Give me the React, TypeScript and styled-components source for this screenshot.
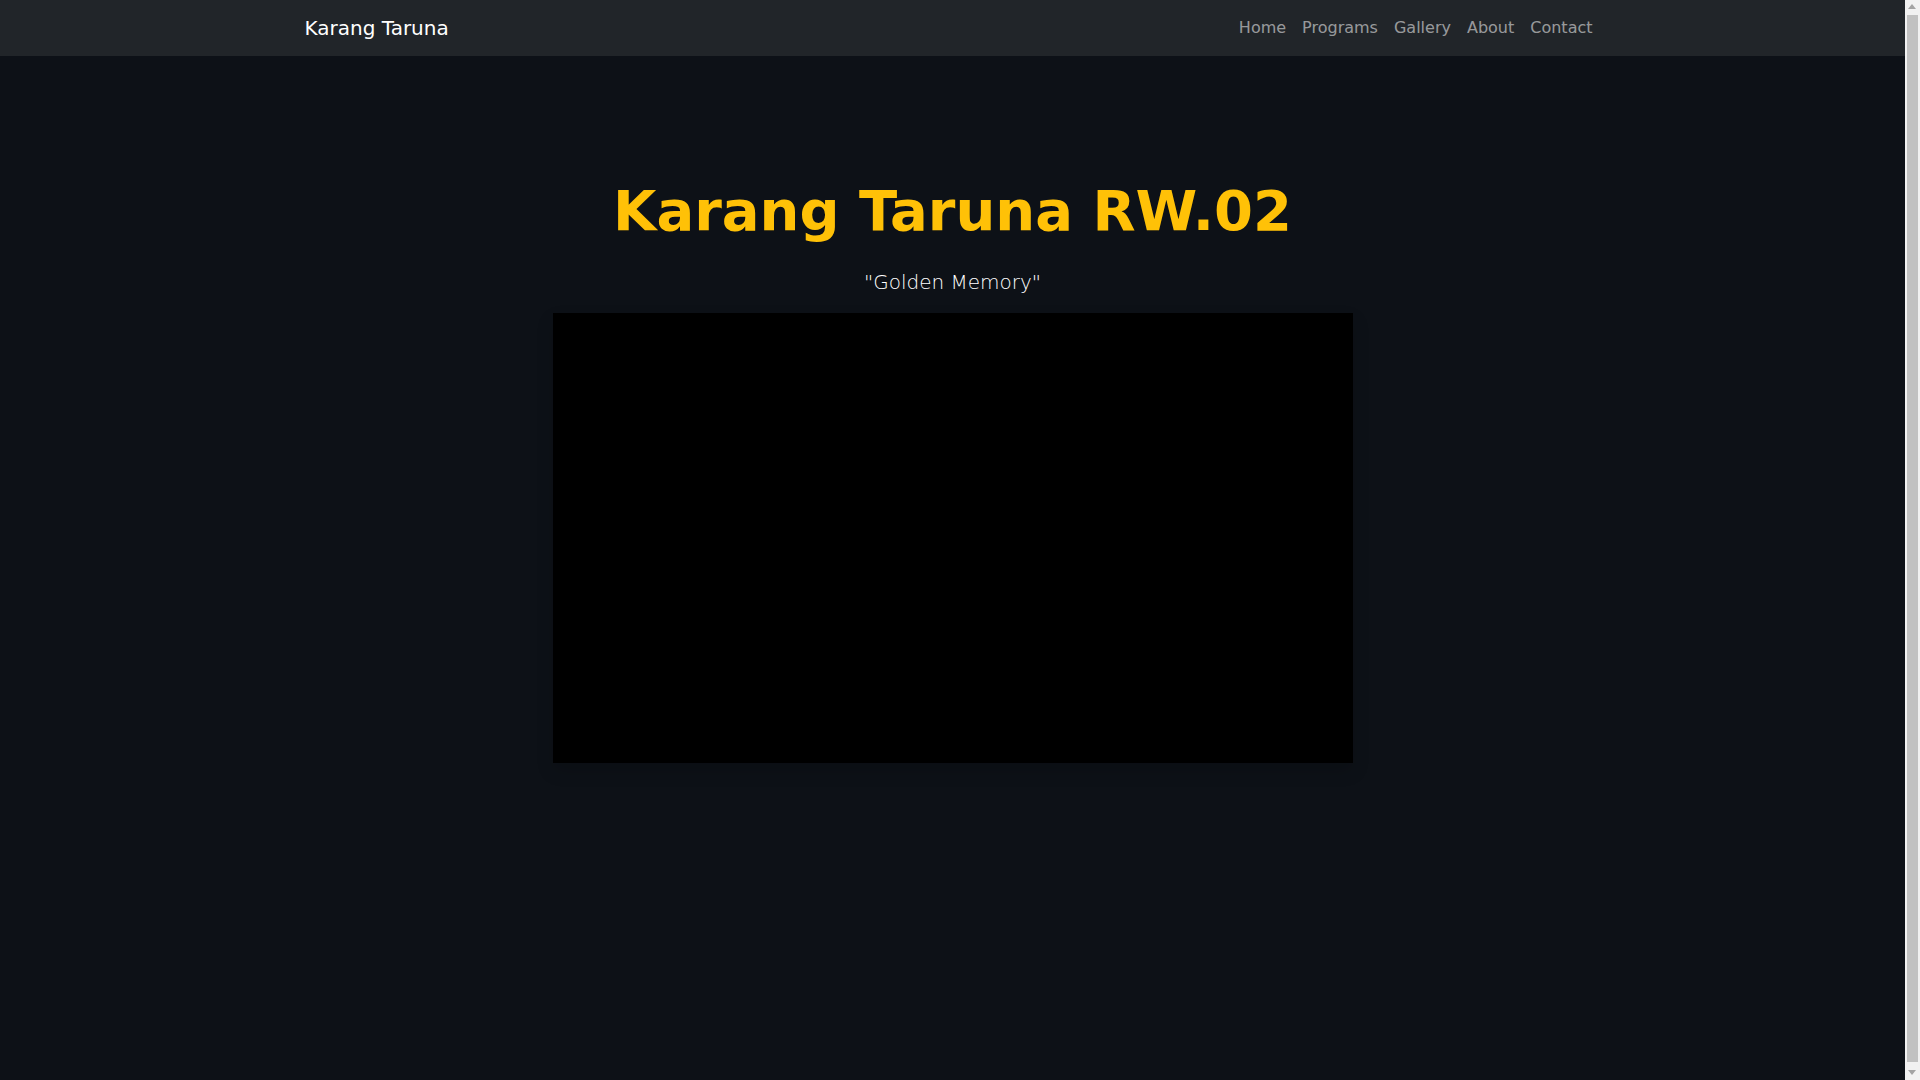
import React from "react";
import styled, { createGlobalStyle } from "styled-components";

const GlobalStyle = createGlobalStyle`
  *, *::before, *::after { box-sizing: border-box; }
  html {
    margin: 0;
    padding: 0 15px 0 0;
    background: #f1f1f1;
  }
  body {
    margin: 0;
    padding: 0;
    min-height: 100vh;
    background: #0d1117;
    color: #ffffff;
    font-family: "DejaVu Sans", "Noto Sans", sans-serif;
    font-size: 16px;
    line-height: 1.5;
  }
`;

const ScrollThumb = styled.div`
  position: fixed;
  top: 15px;
  right: 2px;
  width: 11px;
  height: 1047px;
  background: #c1c1c1;
  &::before {
    content: "";
    position: absolute;
    top: -11px;
    left: 1px;
    border-left: 4.5px solid transparent;
    border-right: 4.5px solid transparent;
    border-bottom: 5px solid #a3a3a3;
  }
  &::after {
    content: "";
    position: absolute;
    bottom: -13px;
    left: 1px;
    border-left: 4.5px solid transparent;
    border-right: 4.5px solid transparent;
    border-top: 5px solid #a3a3a3;
  }
`;

const NavBar = styled.nav`
  background: #212529;
  padding: 8px 0;
`;

const Container = styled.div`
  width: 100%;
  max-width: 1320px;
  margin: 0 auto;
  padding: 0 12px;
`;

const NavInner = styled(Container)`
  display: flex;
  align-items: center;
  justify-content: space-between;
`;

const Brand = styled.a`
  color: #ffffff;
  font-size: 20px;
  line-height: 30px;
  padding: 5px 0;
  text-decoration: none;
`;

const NavList = styled.ul`
  display: flex;
  list-style: none;
  margin: 0;
  padding: 0;
`;

const NavLink = styled.a`
  display: block;
  padding: 8px;
  color: rgba(255, 255, 255, 0.55);
  font-size: 16px;
  line-height: 24px;
  text-decoration: none;
`;

const Hero = styled.section`
  padding-top: 121px;
  text-align: center;
`;

const Title = styled.h1`
  margin: 0 0 23px;
  font-size: 56px;
  line-height: 1.2;
  font-weight: 700;
  color: #ffc107;
`;

const Lead = styled.p`
  margin: 0 0 16px;
  font-size: 20px;
  font-weight: 300;
  line-height: 1.5;
  color: #ffffff;
`;

const VideoFrame = styled.div`
  width: 800px;
  height: 450px;
  margin: 0 auto;
  background: #000000;
  box-shadow: 0 8px 16px rgba(0, 0, 0, 0.15);
`;

const links = ["Home", "Programs", "Gallery", "About", "Contact"];

export default function App() {
  return (
    <>
      <GlobalStyle />
      <NavBar>
        <NavInner>
          <Brand href="#">Karang Taruna</Brand>
          <NavList>
            {links.map((l) => (
              <li key={l}>
                <NavLink href="#">{l}</NavLink>
              </li>
            ))}
          </NavList>
        </NavInner>
      </NavBar>
      <Hero>
        <Container>
          <Title>Karang Taruna RW.02</Title>
          <Lead>"Golden Memory"</Lead>
          <VideoFrame />
        </Container>
      </Hero>
      <ScrollThumb aria-hidden="true" />
    </>
  );
}
